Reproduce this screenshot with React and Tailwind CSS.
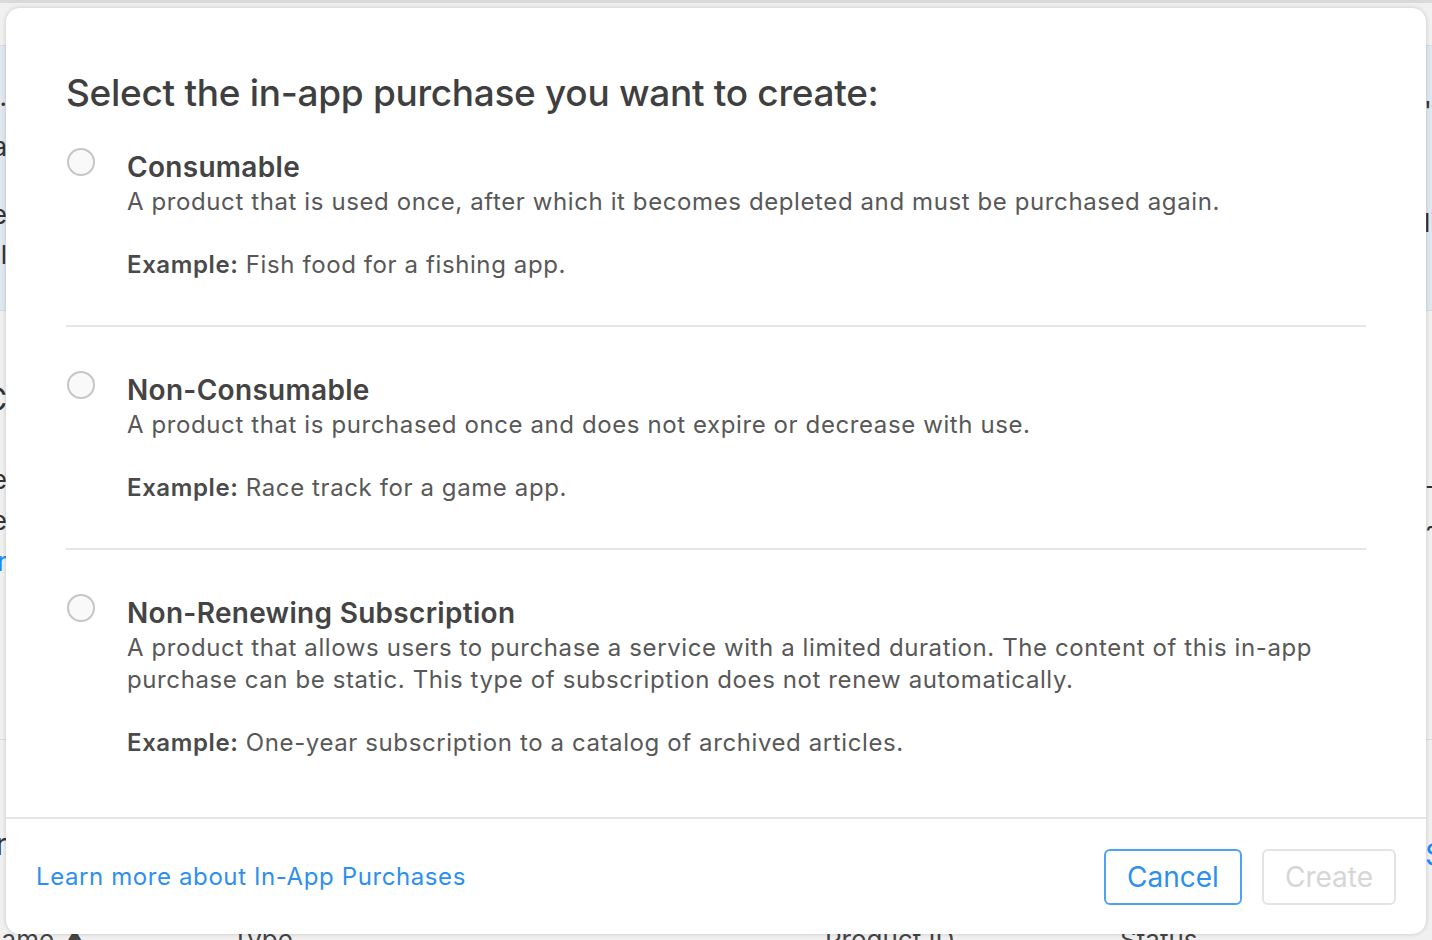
import { useState } from 'react'

const OPTIONS = [
  {
    id: 'consumable',
    title: 'Consumable',
    desc: 'A product that is used once, after which it becomes depleted and must be purchased again.',
    example: 'Fish food for a fishing app.',
  },
  {
    id: 'non-consumable',
    title: 'Non-Consumable',
    desc: 'A product that is purchased once and does not expire or decrease with use.',
    example: 'Race track for a game app.',
  },
  {
    id: 'non-renewing',
    title: 'Non-Renewing Subscription',
    desc: 'A product that allows users to purchase a service with a limited duration. The content of this in-app purchase can be static. This type of subscription does not renew automatically.',
    example: 'One-year subscription to a catalog of archived articles.',
  },
]

function Radio({ checked }) {
  return (
    <span className="mt-[-1px] flex h-[28px] w-[28px] shrink-0 items-center justify-center rounded-full border-2 border-[#c6c6c6] bg-[#f9f9f9]">
      {checked && <span className="h-[12px] w-[12px] rounded-full bg-[#2d8ff0]" />}
    </span>
  )
}

function Backdrop() {
  // page behind the sheet, only its edges show
  return (
    <div className="flex h-[940px] w-[1432px] flex-col overflow-hidden bg-[#f0f0f0] text-[#333]">
      <div className="h-[3px] shrink-0 bg-[#d9d9d9]" />
      <div className="h-[42px] shrink-0" />
      <div className="flex h-[266px] shrink-0 justify-between border-y border-[#d4dce6] bg-[#e1e7ee] text-[26px] leading-[30px]">
        <div className="flex w-[7px] flex-col items-end overflow-hidden pt-[36px]">
          <span className="whitespace-nowrap">t.</span>
          <span className="mt-[20px] whitespace-nowrap">ea</span>
          <span className="mt-[38px] whitespace-nowrap">se</span>
          <span className="mt-[10px] whitespace-nowrap">el</span>
        </div>
        <div className="flex w-[8px] flex-col overflow-hidden pt-[50px]">
          <span className="whitespace-nowrap">'t</span>
          <span className="mt-[82px] whitespace-nowrap">li</span>
        </div>
      </div>
      <div className="flex h-[428px] shrink-0 justify-between text-[26px] leading-[41px]">
        <div className="flex w-[7px] flex-col items-end overflow-hidden pt-[70px]">
          <span className="whitespace-nowrap text-[32px] leading-[38px]">C</span>
          <span className="mt-[40px] whitespace-nowrap">ne</span>
          <span className="whitespace-nowrap">ne</span>
          <span className="whitespace-nowrap text-[#1a8cff]">er</span>
        </div>
        <div className="flex w-[7px] flex-col overflow-hidden pt-[154px]">
          <span className="whitespace-nowrap">-</span>
          <span className="whitespace-nowrap">~</span>
        </div>
      </div>
      <div className="flex h-[186px] shrink-0 justify-between border-t border-[#dcdcdc] text-[30px]">
        <div className="flex w-[7px] items-end justify-end overflow-hidden pb-[58px]">
          <span className="whitespace-nowrap">er</span>
        </div>
        <div className="flex w-[7px] overflow-hidden pt-[92px] text-[#1a8cff]">
          <span className="whitespace-nowrap">S</span>
        </div>
      </div>
      <div className="flex shrink-0 items-start text-[26px] leading-[30px] text-[#444]">
        <span className="ml-[-18px] w-[250px] whitespace-nowrap">Name ▲</span>
        <span className="w-[593px]">Type</span>
        <span className="w-[295px]">Product ID</span>
        <span>Status</span>
      </div>
    </div>
  )
}

export default function App() {
  const [selected, setSelected] = useState(null)

  return (
    <div className="relative h-[940px] w-[1432px] overflow-hidden font-['Inter','Liberation_Sans',sans-serif]">
      <Backdrop />
      <div className="absolute left-[6px] top-[8px] flex h-[926px] w-[1420px] flex-col rounded-[14px] bg-white shadow-[0_0_4px_rgba(0,0,0,0.18)]">
        <div className="flex-1 px-[60px] pt-[62px]">
          <h1 className="text-[37px] font-medium leading-[45px] tracking-[-0.3px] text-[#3f3f3f]">
            Select the in-app purchase you want to create:
          </h1>
          <div className="mt-[34px]">
            {OPTIONS.map((opt, i) => (
              <div key={opt.id}>
                {i > 0 && <div className="h-[2px] bg-[#e6e6e6]" />}
                <label
                  onClick={() => setSelected(opt.id)}
                  className={
                    i === 0
                      ? 'flex cursor-pointer gap-[32px] pb-[44px] pl-px'
                      : 'flex cursor-pointer gap-[32px] pb-[44px] pl-px pt-[45px]'
                  }
                >
                  <Radio checked={selected === opt.id} />
                  <div className="flex-1">
                    <div className="text-[28px] font-semibold leading-[36px] tracking-[0.3px] text-[#444]">
                      {opt.title}
                    </div>
                    <p className="mt-px text-[24px] leading-[32px] tracking-[0.6px] text-[#585858]">{opt.desc}</p>
                    <p className="mt-[31px] text-[24px] leading-[32px] tracking-[0.6px] text-[#585858]">
                      <span className="font-semibold text-[#4a4a4a]">Example:</span> {opt.example}
                    </p>
                  </div>
                </label>
              </div>
            ))}
          </div>
        </div>
        <div className="h-[2px] bg-[#e6e6e6]" />
        <div className="flex h-[115px] items-center justify-between px-[30px]">
          <a className="cursor-pointer text-[24px] tracking-[0.6px] text-[#2d8ff0]">Learn more about In-App Purchases</a>
          <div className="flex gap-[20px]">
            <button className="h-[56px] w-[138px] rounded-[6px] border-2 border-[#4aa3f5] text-[28px] text-[#2d8ff0]">
              Cancel
            </button>
            <button
              disabled={!selected}
              className="h-[56px] w-[134px] rounded-[6px] border-2 border-[#e4e4e4] text-[28px] text-[#d6d6d6]"
            >
              Create
            </button>
          </div>
        </div>
      </div>
    </div>
  )
}
